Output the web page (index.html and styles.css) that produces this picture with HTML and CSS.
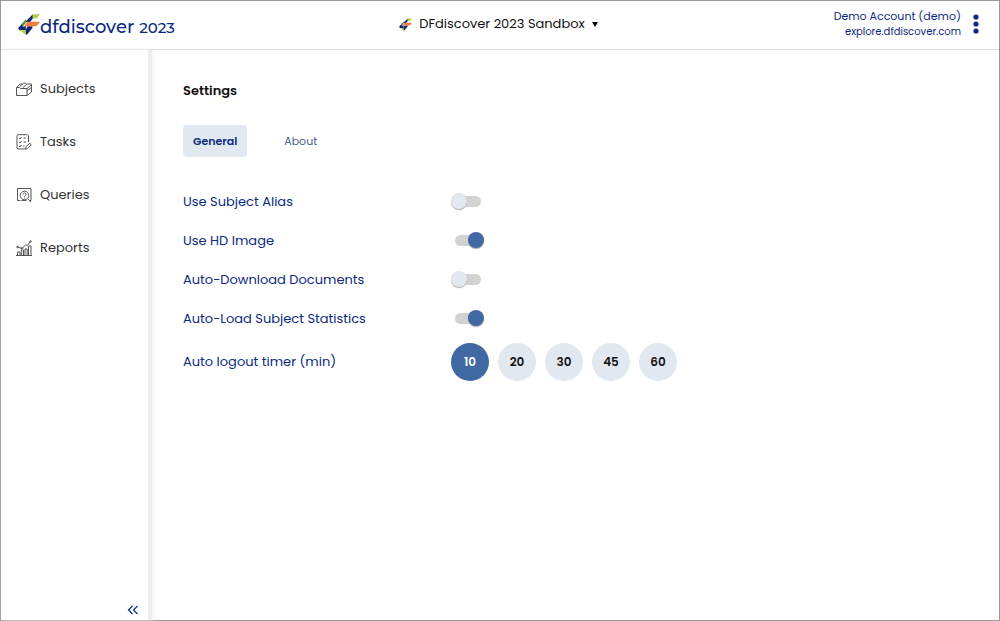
FILE: index.html
```html
<!DOCTYPE html>
<html lang="en">
<head>
  <meta charset="UTF-8">
  <meta name="viewport" content="width=device-width, initial-scale=1.0">
  <title>DFdiscover 2023</title>
  <link rel="stylesheet" href="styles.css">
</head>
<body>
  <svg class="defs" width="0" height="0" aria-hidden="true">
    <symbol id="mark" viewBox="0 0 67 63">
      <path fill="#13296b" d="M45 0v13L37 24H22V24z"/>
      <path fill="#b2d235" d="M46 0h21L56 13H45z"/>
      <path fill="#4c9c3f" d="M10 31L24 15v12L14 38z"/>
      <path fill="#13296b" d="M0 43l12-13 3 8 9-2v13H5z"/>
      <path fill="#b2d235" d="M5 49h19v14z"/>
      <path fill="#13296b" d="M24 63V47l5-10h15v5L28 62z"/>
      <path fill="#f47b45" d="M28 23h39L56 37H20z"/>
    </symbol>
  </svg>

  <div class="app">
    <header class="topbar">
      <a class="brand" href="#">
        <svg class="brand-mark" aria-hidden="true"><use href="#mark"/></svg>
        <span class="brand-name">dfdiscover <span class="brand-year">2023</span></span>
      </a>
      <button type="button" class="study">
        <svg class="study-mark" aria-hidden="true"><use href="#mark"/></svg>
        DFdiscover 2023 Sandbox
        <svg class="caret" viewBox="0 0 6 5" aria-hidden="true"><path d="M0 0h6L3 5z"/></svg>
      </button>
      <div class="account">
        <div class="account-text">
          <div class="account-name">Demo Account (demo)</div>
          <div class="account-host">explore.dfdiscover.com</div>
        </div>
        <button type="button" class="menu-btn" aria-label="Menu">
          <svg width="6" height="20" viewBox="0 0 6 20" fill="currentColor">
            <circle cx="3" cy="3" r="2.6"/>
            <circle cx="3" cy="10" r="2.6"/>
            <circle cx="3" cy="17" r="2.6"/>
          </svg>
        </button>
      </div>
    </header>

    <div class="body">
      <aside class="sidebar">
        <nav class="nav">
          <a class="nav-link" href="#">
            <svg class="nav-icon" viewBox="0 0 16 16">
              <path d="M.5 6.500h3l1 1h6.500v7H.5zM11 14.500l4.500-3.500V3.500L11 7.500M.5 6.500L4 3h2l.8.8M3.500 6l4-3.800h2l.8.900M6.500 7l4.500-4h4.500M11 10l4.500-3.700"/>
            </svg>
            Subjects
          </a>
          <a class="nav-link" href="#">
            <svg class="nav-icon" viewBox="0 0 16 16">
              <path d="M9 15H2L1 14V1.500L2 .7h9.500l1 1V8M3 4l1 1 1.500-2M3 8l1 1 1.500-2M3 12l1 1 1.500-2M7.500 4H10M7.500 8H10M7 12h1.500M9.500 15.200l.5-2.500 3.800-3.500 1.500 1.600-3.600 3.700z"/>
            </svg>
            Tasks
          </a>
          <a class="nav-link" href="#">
            <svg class="nav-icon" viewBox="0 0 16 16">
              <path d="M4.500 13.500h-3v-12H15v12h-1.500M12 12l3 3.300M5.500 13.500h5"/>
              <circle cx="8.500" cy="8.500" r="4.300"/>
              <path d="M7 7.500c0-2 3-2 3 0 0 1.200-1.500 1-1.500 2.300M8.500 10.600v.9"/>
            </svg>
            Queries
          </a>
          <a class="nav-link" href="#">
            <svg class="nav-icon" viewBox="0 0 16 16">
              <path d="M0 15.500h16M1.500 15.500V12H4v3.500M5.300 15.500V10h2.200v5.500M9 15.500V9h2.200v6.500M12.500 15.500V6H15v9.500M1.500 7L6 8.500 9.500 5l2 .3L14.500 1.500"/>
              <circle cx="1.500" cy="7" r=".8"/>
              <circle cx="6" cy="8.300" r=".8"/>
              <circle cx="14.500" cy="1.500" r=".8"/>
            </svg>
            Reports
          </a>
        </nav>
        <button type="button" class="collapse" aria-label="Collapse sidebar">
          <svg width="12" height="10" viewBox="0 0 12 10"><path d="M5.500 1l-4 4 4 4M10.500 1l-4 4 4 4"/></svg>
        </button>
      </aside>

      <main class="content">
        <h1 class="title">Settings</h1>
        <div class="tabs" role="tablist">
          <button type="button" class="tab active" role="tab" aria-selected="true">General</button>
          <button type="button" class="tab" role="tab" aria-selected="false">About</button>
        </div>

        <form class="settings">
          <div class="row">
            <label for="alias">Use Subject Alias</label>
            <input type="checkbox" class="switch" id="alias">
          </div>
          <div class="row">
            <label for="hd">Use HD Image</label>
            <input type="checkbox" class="switch" id="hd" checked>
          </div>
          <div class="row">
            <label for="download">Auto-Download Documents</label>
            <input type="checkbox" class="switch" id="download">
          </div>
          <div class="row">
            <label for="stats">Auto-Load Subject Statistics</label>
            <input type="checkbox" class="switch" id="stats" checked>
          </div>
          <div class="row row-timer">
            <span id="timer-label">Auto logout timer (min)</span>
            <div class="timer" role="group" aria-labelledby="timer-label">
              <button type="button" class="minutes selected">10</button>
              <button type="button" class="minutes">20</button>
              <button type="button" class="minutes">30</button>
              <button type="button" class="minutes">45</button>
              <button type="button" class="minutes">60</button>
            </div>
          </div>
        </form>
      </main>
    </div>
  </div>
</body>
</html>
```

FILE: styles.css
```css
* {
  box-sizing: border-box;
}
body {
  margin: 0;
  font-family: Poppins, Inter, sans-serif;
  font-size: 13px;
  line-height: 20px;
  color: #0a2a80;
  background: #fff;
}
button {
  font: inherit;
  color: inherit;
  background: none;
  border: none;
  padding: 0;
  cursor: pointer;
}
a {
  color: inherit;
  text-decoration: none;
}
.defs {
  position: absolute;
}
.app {
  display: flex;
  flex-direction: column;
  min-height: 100vh;
  border: 1px solid #999;
}

/* Top bar */
.topbar {
  display: grid;
  grid-template-columns: 1fr auto 1fr;
  align-items: center;
  height: 49px;
  padding: 0 20px 2px 17px;
  border-bottom: 1px solid #ddd;
}
.brand {
  display: flex;
  align-items: center;
}
.brand-mark {
  width: 22px;
  height: 21px;
}
.brand-name {
  padding-top: 6px;
  font-family: Montserrat, Poppins, Inter, sans-serif;
  font-size: 18px;
  font-weight: 500;
}
.brand-year {
  font-size: 15px;
}
.study {
  display: flex;
  align-items: center;
  gap: 7px;
  font-size: 13px;
  color: #111;
}
.study-mark {
  width: 13px;
  height: 13px;
}
.caret {
  width: 6px;
  height: 5px;
}
.account {
  display: flex;
  justify-content: flex-end;
  align-items: center;
  gap: 12px;
  text-align: right;
}
.account-name {
  font-size: 11px;
  line-height: 16px;
}
.account-host {
  font-size: 10px;
  line-height: 16px;
}
.menu-btn {
  display: flex;
}

/* Sidebar */
.body {
  display: flex;
  flex: 1;
}
.sidebar {
  display: flex;
  flex-direction: column;
  justify-content: space-between;
  width: 151px;
  border-right: 4px solid #eee;
  box-shadow: 2px 0 4px #f4f4f4;
}
.nav {
  display: flex;
  flex-direction: column;
  gap: 33px;
  padding: 29px 0 0 15px;
}
.nav-link {
  display: flex;
  align-items: center;
  gap: 8px;
  color: #333;
}
.nav-icon {
  width: 16px;
  height: 16px;
  fill: none;
  stroke: #555;
  stroke-width: 1;
}
.collapse {
  display: flex;
  align-self: flex-end;
  padding: 5px 9px;
}
.collapse svg {
  fill: none;
  stroke: currentColor;
  stroke-width: 1.2;
}

/* Settings */
.content {
  flex: 1;
  padding: 31px;
}
.title {
  margin: 0 0 24px;
  font-size: 13px;
  font-weight: 600;
  line-height: 20px;
  color: #111;
}
.tabs {
  display: flex;
  gap: 27px;
  margin-bottom: 25px;
}
.tab {
  height: 32px;
  padding: 0 10px;
  border-radius: 4px;
  font-size: 11px;
  color: #465f86;
}
.tab.active {
  background: #e2e8f0;
  font-weight: 600;
  color: #0a2a80;
}
.row {
  display: grid;
  grid-template-columns: 268px 1fr;
  align-items: center;
  min-height: 39px;
}
.row-timer {
  min-height: 48px;
}
.switch {
  appearance: none;
  position: relative;
  width: 26px;
  height: 11px;
  margin: 0 4px;
  border-radius: 6px;
  background: #d2d2d2;
  cursor: pointer;
}
.switch::before {
  content: "";
  position: absolute;
  top: -3px;
  left: -4px;
  width: 16px;
  height: 16px;
  border-radius: 50%;
  background: #e2e8f0;
  box-shadow: 0 1px 1px #aaa;
}
.switch:checked::before {
  left: 13px;
  background: #4069a4;
}
.timer {
  display: flex;
  gap: 9px;
}
.minutes {
  width: 38px;
  height: 38px;
  border-radius: 50%;
  background: #e2e8f0;
  font-size: 12px;
  font-weight: 600;
  color: #111;
}
.minutes.selected {
  background: #4069a4;
  color: #fff;
}
```
